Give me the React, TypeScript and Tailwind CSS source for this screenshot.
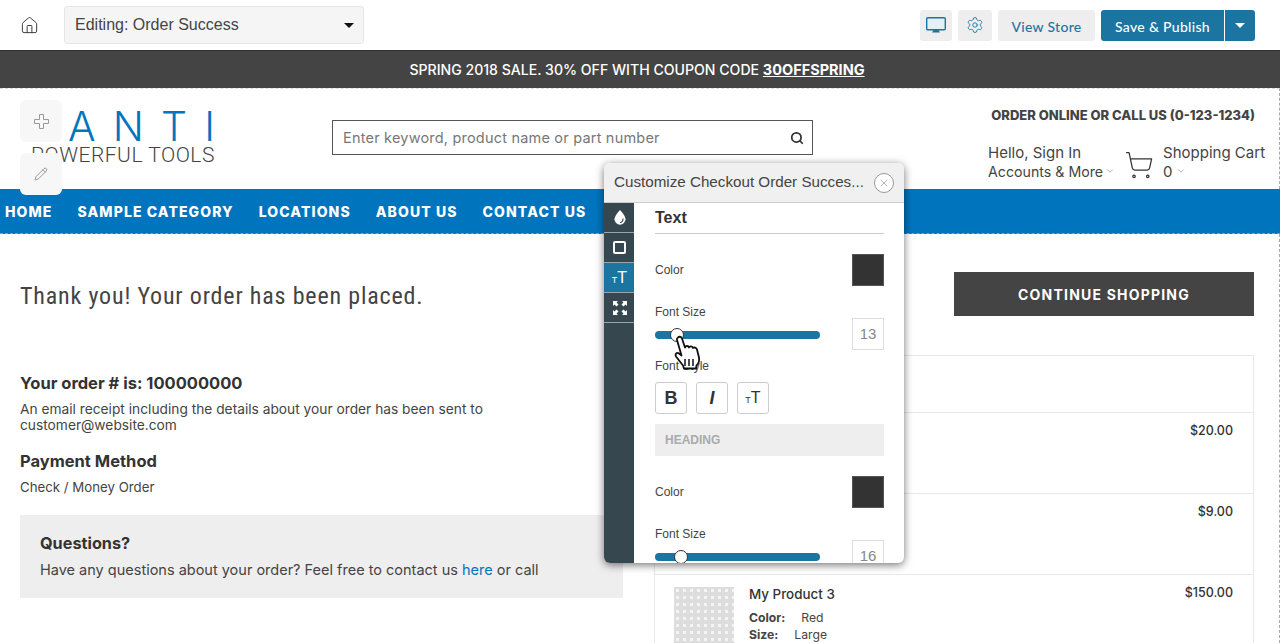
import React from 'react';
import { ChevronDown, House, Pencil, Search, Settings, ShoppingCart, X } from 'lucide-react';

const body = "font-['Inter','Open_Sans',sans-serif]";
const arial = "font-['Liberation_Sans',sans-serif]";

const Caret = ({ className }: { className: string }) => (
  <span className={`h-0 w-0 border-x-[5px] border-t-[5px] border-x-transparent ${className}`} />
);

const SizeIcon = ({ className }: { className: string }) => (
  <span className={`flex items-end font-normal leading-none ${arial} ${className}`}>
    <span className="mb-[1px] text-[9px]">T</span>
    <span className="text-[16px]">T</span>
  </span>
);

const Slider = ({ left }: { left: string }) => (
  <div className="relative h-2 w-[165px] rounded bg-[#1c75a0]">
    <span className={`absolute top-[-3px] h-[14px] w-[14px] rounded-full border border-[#333] bg-white ${left}`} />
  </div>
);

const ColorRow = () => (
  <div className="flex h-8 items-center justify-between">
    <span className="text-[12px] text-[#444]">Color</span>
    <span className="h-8 w-8 border border-[#555] bg-[#333]" />
  </div>
);

const SizeRow = ({ value, left }: { value: string; left: string }) => (
  <div className="flex items-start justify-between">
    <div>
      <div className="h-[14px] text-[12px] leading-[14px] text-[#444]">Font Size</div>
      <div className="mt-[12px]">
        <Slider left={left} />
      </div>
    </div>
    <span className="mt-[13px] flex h-8 w-8 items-center justify-center border border-[#ddd] text-[15px] text-[#888]">{value}</span>
  </div>
);

const StyleButton = ({ children }: { children: React.ReactNode }) => (
  <span className="flex h-8 w-8 items-center justify-center rounded-[3px] border border-[#ccc] text-[#333]">{children}</span>
);

const Panel = () => (
  <div className={`absolute left-[604px] top-[163px] z-20 flex h-[400px] w-[300px] flex-col overflow-hidden rounded-md bg-white shadow-[0_2px_8px_rgba(0,0,0,0.55)] ${arial}`}>
    <div className="flex h-10 shrink-0 items-center justify-between border-b border-[#ccc] bg-[#f0f0f0] pl-[10px] pr-[10px]">
      <span className="whitespace-nowrap text-[15.2px] text-[#444]">Customize Checkout Order Succes...</span>
      <span className="flex h-5 w-5 items-center justify-center rounded-full border border-[#999] bg-white text-[#999]">
        <X size={12} strokeWidth={1.5} />
      </span>
    </div>
    <div className="flex min-h-0 flex-1">
      <div className="flex w-[30px] shrink-0 flex-col bg-[#37474f] pl-px text-white">
        <div className="-ml-px flex h-[30px] items-center justify-center border-b border-[#9aa5aa] pl-px">
          <svg width="12" height="15" viewBox="0 0 12 15" fill="white"><path d="M6 0C6 0 11.500 5.500 11.500 9.200A5.500 5.500 0 0 1 .5 9.200C.5 5.500 6 0 6 0Z" /><path d="M8.800 8.500a3 3 0 0 1-2.800 4" fill="none" stroke="#37474f" strokeWidth="1.200" /></svg>
        </div>
        <div className="-ml-px flex h-[30px] items-center justify-center border-b border-[#9aa5aa] pl-px">
          <span className="h-[13px] w-[13px] rounded-[2px] border-2 border-white" />
        </div>
        <div className="-ml-px flex h-[30px] items-center justify-center border-b border-[#9aa5aa] bg-[#1c75a0] pl-px">
          <SizeIcon className="text-white" />
        </div>
        <div className="-ml-px flex h-[30px] items-center justify-center border-b border-[#9aa5aa] pl-px">
          <svg width="14" height="14" viewBox="0 0 14 14" fill="white">
            <path d="M0 0h5L3.500 1.500 5.500 3.500 3.500 5.500 1.500 3.500 0 5ZM14 0v5L12.500 3.500 10.500 5.500 8.500 3.500 10.500 1.500 9 0ZM0 14V9L1.500 10.500 3.500 8.500 5.500 10.500 3.500 12.500 5 14ZM14 14H9L10.500 12.500 8.500 10.500 10.500 8.500 12.500 10.500 14 9Z" />
          </svg>
        </div>
      </div>
      <div className="relative min-w-0 flex-1 overflow-hidden pl-[21px] pr-5">
        <div className="flex h-[31px] items-start border-b border-[#ccc] pt-[6px]">
          <span className="text-[16px] font-bold leading-[18px] text-[#333]">Text</span>
        </div>
        <div className="mt-5">
          <ColorRow />
        </div>
        <div className="mt-[19px]">
          <SizeRow value="13" left="left-[15px]" />
        </div>
        <div className="mt-[9px] h-[14px] text-[12px] leading-[14px] text-[#444]">Font Style</div>
        <div className="mt-[9px] flex gap-[9px]">
          <StyleButton><span className="text-[18px] font-bold">B</span></StyleButton>
          <StyleButton><span className="text-[18px] font-bold italic">I</span></StyleButton>
          <StyleButton><SizeIcon className="text-[#333]" /></StyleButton>
        </div>
        <div className="mt-[10px] flex h-8 items-center bg-[#eee] pl-[10px] text-[12px] font-bold text-[#aaa]">HEADING</div>
        <div className="mt-5">
          <ColorRow />
        </div>
        <div className="mt-[19px]">
          <SizeRow value="16" left="left-[19px]" />
        </div>
      </div>
    </div>
  </div>
);

const NavItem = ({ label }: { label: string }) => (
  <span className="text-[14px] font-extrabold tracking-[1.1px] text-white">{label}</span>
);

const PriceRow = ({ price, height, children }: { price: string; height: string; children?: React.ReactNode }) => (
  <div className={`flex justify-between border-b border-[#e8e8e8] pl-[19px] pr-5 pt-2 ${height}`}>
    <div>{children}</div>
    <span className="text-[12.5px] font-medium leading-5 text-[#333]">{price}</span>
  </div>
);

export default function App() {
  return (
    <div className={`relative h-[643px] w-[1280px] overflow-hidden bg-white ${body}`}>
      {/* editor bar */}
      <div className="flex h-[50px] items-center pl-[20px] pr-[25px]">
        <House size={19} strokeWidth={1.2} className="text-[#333]" />
        <div className={`ml-[25px] flex h-[38px] w-[300px] items-center justify-between rounded-[3px] border border-[#e6e6e6] bg-[#f5f5f5] pl-[10px] pr-[9px] text-[16px] text-[#444] ${arial}`}>
          <span>Editing: Order Success</span>
          <Caret className="border-t-[#111]" />
        </div>
        <div className="ml-auto flex h-[31px] items-stretch gap-[6px] font-['Lato',sans-serif]">
          <span className="flex w-8 items-center justify-center rounded-[3px] bg-[#eee]">
            <svg width="20" height="16" viewBox="0 0 20 16" fill="none">
              <rect x="0.700" y="0.700" width="18.600" height="12" rx="1" stroke="#1c75a0" strokeWidth="1.400" fill="#e6eff3" />
              <path d="M6 15.500h8L12.500 13h-5Z" fill="#1c75a0" />
            </svg>
          </span>
          <span className="flex w-[34px] items-center justify-center rounded-[3px] bg-[#eee]">
            <Settings size={18} strokeWidth={1.2} className="text-[#1c75a0]" />
          </span>
          <span className="flex w-[97px] items-center justify-center rounded-[3px] bg-[#eee] pt-[2px] text-[14px] font-medium tracking-[0.3px] text-[#1c75a0]">View Store</span>
          <div className="flex text-white">
            <span className="flex w-[123px] items-center justify-center rounded-l-[3px] bg-[#1c75a0] pt-[2px] text-[14px] font-medium tracking-[0.3px]">Save &amp; Publish</span>
            <span className="ml-px flex w-[30px] items-center justify-center rounded-r-[3px] bg-[#1c75a0]">
              <Caret className="border-t-white" />
            </span>
          </div>
        </div>
      </div>

      {/* promo banner */}
      <div className="flex h-[38px] items-center justify-center border-t border-[#2f2f2f] bg-[#444] pr-[6px] text-[14.1px] font-medium text-white">
        <span>SPRING 2018 SALE. 30% OFF WITH COUPON CODE <span className="text-[14.5px] font-bold underline">30OFFSPRING</span></span>
      </div>

      {/* store header */}
      <div className="flex h-[101px] border-t border-r border-dashed border-t-[#ddd] border-r-[#aaa]">
        <div className="ml-[31px] w-[184px] pt-[18px]">
          <div className="flex h-[38px] justify-between pl-[37px] text-[41px] font-light leading-[38px] text-[#0075be]">
            <span>A</span><span>N</span><span>T</span><span>I</span>
          </div>
          <div className="whitespace-nowrap font-['Roboto',sans-serif] text-[21px] font-light leading-[20px] tracking-[0.5px] text-[#444]">POWERFUL TOOLS</div>
        </div>
        <div className="ml-[117px] mt-[31px] flex h-[35px] w-[481px] items-center justify-between border border-solid border-[#555] pl-[10px] pr-2">
          <span className="text-[14.5px] tracking-[0.2px] text-[#777]">Enter keyword, product name or part number</span>
          <Search size={14} strokeWidth={3} className="text-[#333]" />
        </div>
        <div className="ml-[175px] w-[290px] pt-[17px]">
          <div className="pr-[23px] text-right text-[13px] font-extrabold text-[#444]">ORDER ONLINE OR CALL US (0-123-1234)</div>
          <div className="mt-[17px] flex whitespace-nowrap text-[15px] leading-[19px] text-[#444]">
            <div>
              <div>Hello, Sign In</div>
              <div className="flex items-center gap-[2px] text-[14.2px]">Accounts &amp; More <ChevronDown size={10} strokeWidth={1} /></div>
            </div>
            <ShoppingCart size={30} strokeWidth={1} className="ml-[9px] mt-[7px] shrink-0 text-[#333]" />
            <div className="ml-[9px]">
              <div>Shopping Cart</div>
              <div className="flex items-center gap-[3px]">0 <ChevronDown size={10} strokeWidth={1} /></div>
            </div>
          </div>
        </div>
      </div>

      {/* nav */}
      <div className="flex h-[45px] items-center gap-[25px] border-b border-dashed border-b-[#999] bg-[#0075be] pl-[5px]">
        <NavItem label="HOME" />
        <NavItem label="SAMPLE CATEGORY" />
        <NavItem label="LOCATIONS" />
        <NavItem label="ABOUT US" />
        <NavItem label="CONTACT US" />
      </div>

      {/* order content */}
      <div className="flex h-[409px] border-r border-dashed border-r-[#aaa] text-[#333]">
        <div className="ml-5 w-[603px]">
          <h1 className="mt-[45px] font-['Roboto',sans-serif] text-[24px] leading-[34px] tracking-[0.82px] text-[#444] [font-stretch:75%]">Thank you! Your order has been placed.</h1>
          <h2 className="mt-[58px] text-[16.5px] font-bold leading-[24px]">Your order # is: 100000000</h2>
          <p className="mt-[6px] text-[13.75px] leading-4 text-[#444]">An email receipt including the details about your order has been sent to<br />customer@website.com</p>
          <h2 className="mt-[16px] text-[16.5px] font-bold leading-[24px]">Payment Method</h2>
          <p className="mt-[4px] text-[13.25px] leading-[20px] text-[#444]">Check / Money Order</p>
          <div className="mt-[18px] h-[83px] bg-[#eee] pl-5 pt-4">
            <h3 className="text-[16.25px] font-bold leading-6">Questions?</h3>
            <p className="mt-[5px] text-[14.5px] leading-5 text-[#444]">Have any questions about your order? Feel free to contact us <span className="text-[#0075be]">here</span> or call</p>
          </div>
        </div>
        <div className="ml-[31px] w-[600px]">
          <div className="ml-[300px] mt-[38px] flex h-[44px] w-[300px] items-center justify-center bg-[#444] text-[14px] font-bold tracking-[1.2px] text-white">CONTINUE SHOPPING</div>
          <div className="mt-[39px] border border-b-0 border-[#e8e8e8]">
            <div className="h-[57px] border-b border-[#e8e8e8]" />
            <PriceRow price="$20.00" height="h-[81px]" />
            <PriceRow price="$9.00" height="h-[81px]" />
            <PriceRow price="$150.00" height="h-[81px]">
              <div className="flex gap-[15px] pt-1">
                <div className="h-[60px] w-[60px] bg-[#ddd] bg-[radial-gradient(#f4f4f4_2px,transparent_2px)] bg-[length:7px_7px]" />
                <div className="-mt-[2px]">
                  <div className="text-[13.4px] font-medium leading-[18px]">My Product 3</div>
                  <div className="mt-[6px] text-[12.2px] leading-[17px] text-[#444]"><b>Color:</b><span className="ml-[16px]">Red</span></div>
                  <div className="text-[12.2px] leading-[17px] text-[#444]"><b>Size:</b><span className="ml-[16px]">Large</span></div>
                </div>
              </div>
            </PriceRow>
          </div>
        </div>
      </div>

      {/* page editor floating tools */}
      <div className="absolute left-5 top-[100px] flex h-[42px] w-[42px] items-center justify-center rounded-md bg-[#f7f7f7]">
        <svg width="15" height="15" viewBox="0 0 15 15" fill="none" stroke="#999"><path d="M5.500.5h4v5h5v4h-5v5h-4v-5h-5v-4h5Z" /></svg>
      </div>
      <div className="absolute left-5 top-[153px] flex h-[42px] w-[42px] items-center justify-center rounded-md bg-[#f7f7f7]">
        <Pencil size={14} strokeWidth={1.1} className="text-[#666]" />
      </div>

      <Panel />

      {/* hand cursor */}
      <svg className="absolute left-[673px] top-[335px] z-30" width="30" height="36" viewBox="0 0 30 36">
        <path d="M5 2.500c1.500-1.500 3.500-.5 4 1l3 9c.5-2 3.500-2 4 0 .5-1.500 3.500-1.500 4 .5 1-1 3.500-.5 4 1.500l2 8c.5 3-.5 6-2.500 8l-.5 3H11l-1-3-7-9c-1.500-2.500 1-4.500 3-3l2.500 2L4 5c-.3-1 0-2 1-2.500Z" fill="white" stroke="#111" strokeWidth="1.800" strokeLinejoin="round" />
        <path d="M12 24v7M16 24v7M20 24v7" stroke="#111" strokeWidth="1.500" />
      </svg>
    </div>
  );
}
